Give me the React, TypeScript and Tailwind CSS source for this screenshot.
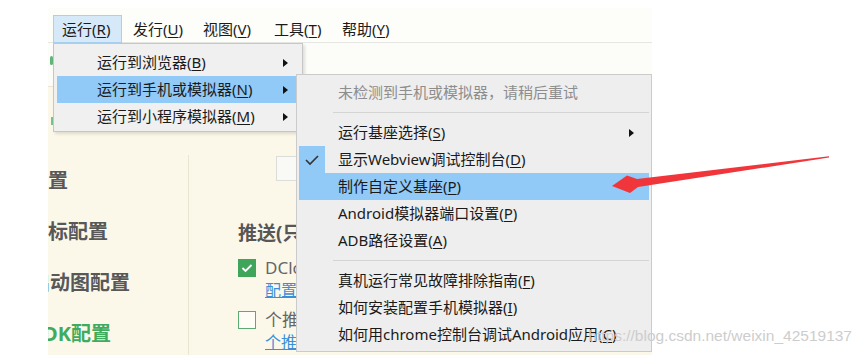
import type { ReactNode } from 'react'

const FONT = { fontFamily: '"Noto Sans", "Noto Sans CJK SC", sans-serif' }

function Arrow() {
  return (
    <svg width="5" height="8" viewBox="0 0 5 8" className="shrink-0">
      <path d="M0 0 L5 4 L0 8 Z" fill="#111" />
    </svg>
  )
}

function Key({ k }: { k: string }) {
  return (
    <>
      (<u className="underline-offset-2">{k}</u>)
    </>
  )
}

interface ItemProps {
  children: ReactNode
  active?: boolean
  disabled?: boolean
  checked?: boolean
  sub?: boolean
  pl: string
  pr: string
}

function MenuItem({ children, active, disabled, checked, sub, pl, pr }: ItemProps) {
  return (
    <div
      className={`relative flex h-[27px] items-center justify-between text-[15px] ${pl} ${pr} ${
        active ? 'bg-[#91c9f7]' : ''
      } ${disabled ? 'text-[#8d8d8d]' : 'text-[#1a1a1a]'}`}
    >
      {checked && (
        <div className="absolute left-0 top-0 flex h-[27px] w-[26px] items-center justify-center bg-[#91c9f7]">
          <svg width="16" height="12" viewBox="0 0 16 12">
            <path d="M2 6 L6 10 L14 2" fill="none" stroke="#333" strokeWidth="1.6" />
          </svg>
        </div>
      )}
      <span className="whitespace-nowrap">{children}</span>
      {sub && <Arrow />}
    </div>
  )
}

function Sep() {
  return (
    <div className="flex h-[13px] items-center pl-[34px]">
      <div className="h-px w-full bg-[#d4d4d4]" />
    </div>
  )
}

export default function App() {
  return (
    <div className="relative h-[355px] w-[863px] overflow-hidden bg-white" style={FONT}>
      <div className="ml-[48px] pt-[8px]">
        <div className="relative flex h-[347px] w-[604px] flex-col overflow-hidden">
          {/* Menu bar */}
          <div className="flex h-[35px] shrink-0 border-b border-[#e6e6e3] bg-[#fdfdfa] pl-[5px] text-[15px] text-[#1a1a1a]">
            <div className="mt-[7px] flex h-[28px] w-[69px] items-center border border-[#a8d1f1] bg-[#d6e9f9] pl-[8px]">
              运行<Key k="R" />
            </div>
            <div className="mt-[7px] flex h-[28px] w-[71px] items-center pl-[11px]">
              发行<Key k="U" />
            </div>
            <div className="mt-[7px] flex h-[28px] w-[71px] items-center pl-[10px]">
              视图<Key k="V" />
            </div>
            <div className="mt-[7px] flex h-[28px] w-[68px] items-center pl-[10px]">
              工具<Key k="T" />
            </div>
            <div className="mt-[7px] flex h-[28px] items-center pl-[10px]">
              帮助<Key k="Y" />
            </div>
          </div>

          {/* Toolbar */}
          <div className="flex h-[44px] shrink-0 items-start border-b border-[#ebe6d4] bg-[#fcfcf8]">
            <div className="ml-[2px] mt-[13px] h-[9px] w-[3px] rounded-sm bg-[#5fb57a]" />
          </div>

          {/* Content */}
          <div className="relative flex flex-1 bg-[#fbf8ea]">
            <div className="absolute left-[3px] top-[30px] h-[8px] w-[2px] bg-[#7bbf90]" />
            <div className="flex w-[140px] shrink-0 flex-col pt-[68px] text-[20px] font-bold text-[#585858]">
              <div className="-ml-[20px] flex h-[51px] items-center whitespace-nowrap">配置</div>
              <div className="-ml-[20px] flex h-[51px] items-center whitespace-nowrap">图标配置</div>
              <div className="-ml-[18px] flex h-[51px] items-center whitespace-nowrap">启动图配置</div>
              <div className="-ml-[16px] flex h-[51px] items-center whitespace-nowrap text-[#3fab5e]">SDK配置</div>
            </div>

            <div className="mt-[68px] flex flex-1 flex-col border-l border-[#ebe5d3] pl-[49px]">
              <div className="ml-[38px] mt-px h-[25px] w-[120px] border border-[#dcdcd8] bg-[#f9f9f6]" />
              <div className="mt-[40px] flex h-[24px] items-center whitespace-nowrap text-[19px] font-bold text-[#575757]">
                推送(只能选择一个推送模块)
              </div>
              <div className="mt-[13px] flex items-center gap-[9px]">
                <div className="flex h-[18px] w-[18px] items-center justify-center bg-[#3ea55b]">
                  <svg width="12" height="10" viewBox="0 0 12 10">
                    <path d="M1.5 5 L4.5 8 L10.5 2" fill="none" stroke="#fff" strokeWidth="1.8" />
                  </svg>
                </div>
                <span className="whitespace-nowrap text-[17px] leading-[20px] text-[#666]">DCloud UniPush</span>
              </div>
              <div className="ml-[27px] mt-[2px] whitespace-nowrap text-[16px] leading-[20px] text-[#3a8fd9] underline">
                配置参数
              </div>
              <div className="mt-[10px] flex items-center gap-[9px]">
                <div className="h-[18px] w-[18px] border-[1.5px] border-[#5cab73] bg-[#fdfcf5]" />
                <span className="whitespace-nowrap text-[17px] leading-[20px] text-[#666]">个推推送</span>
              </div>
              <div className="ml-[27px] mt-[2px] whitespace-nowrap text-[16px] leading-[20px] text-[#3a8fd9] underline">
                个推配置
              </div>
            </div>
          </div>

          {/* First dropdown */}
          <div className="absolute left-[5px] top-[35px] w-[250px] border border-[#c6c6c6] bg-[#f0f0f0] px-[3px] pb-px pt-[5px] shadow-[2px_2px_3px_rgba(0,0,0,0.12)]">
            <MenuItem pl="pl-[40px]" pr="pr-[11px]" sub>
              运行到浏览器<Key k="B" />
            </MenuItem>
            <MenuItem pl="pl-[40px]" pr="pr-[11px]" sub active>
              运行到手机或模拟器<Key k="N" />
            </MenuItem>
            <MenuItem pl="pl-[40px]" pr="pr-[11px]" sub>
              运行到小程序模拟器<Key k="M" />
            </MenuItem>
          </div>

          {/* Submenu */}
          <div className="absolute left-[248px] top-[66px] w-[356px] border border-[#cbcbcb] bg-[#eeeeee] px-[2px] pb-[3px] pt-[4px]">
            <MenuItem pl="pl-[39px]" pr="pr-[15px]" disabled>
              未检测到手机或模拟器，请稍后重试
            </MenuItem>
            <Sep />
            <MenuItem pl="pl-[39px]" pr="pr-[15px]" sub>
              运行基座选择<Key k="S" />
            </MenuItem>
            <MenuItem pl="pl-[39px]" pr="pr-[15px]" checked>
              显示Webview调试控制台<Key k="D" />
            </MenuItem>
            <MenuItem pl="pl-[39px]" pr="pr-[15px]" active>
              制作自定义基座<Key k="P" />
            </MenuItem>
            <MenuItem pl="pl-[39px]" pr="pr-[15px]">
              Android模拟器端口设置<Key k="P" />
            </MenuItem>
            <MenuItem pl="pl-[39px]" pr="pr-[15px]">
              ADB路径设置<Key k="A" />
            </MenuItem>
            <Sep />
            <MenuItem pl="pl-[39px]" pr="pr-[15px]">
              真机运行常见故障排除指南<Key k="F" />
            </MenuItem>
            <MenuItem pl="pl-[39px]" pr="pr-[15px]">
              如何安装配置手机模拟器<Key k="I" />
            </MenuItem>
            <MenuItem pl="pl-[39px]" pr="pr-[15px]">
              如何用chrome控制台调试Android应用<Key k="C" />
            </MenuItem>
          </div>
        </div>
      </div>

      {/* Watermark */}
      <div
        className="pointer-events-none absolute right-[11px] top-[328px] whitespace-nowrap text-[15.5px] leading-none text-[#cdcdcd]"
        style={{ fontFamily: '"Liberation Sans", Arial, sans-serif' }}
      >
        https://blog.csdn.net/weixin_42519137
      </div>

      {/* Red annotation arrow */}
      <svg className="pointer-events-none absolute left-0 top-0" width="863" height="355">
        <polygon
          points="829,156.3 637,179 627,175.5 612,186 630,193 638,187 829,157.6"
          fill="#f0363a"
        />
      </svg>
    </div>
  )
}
